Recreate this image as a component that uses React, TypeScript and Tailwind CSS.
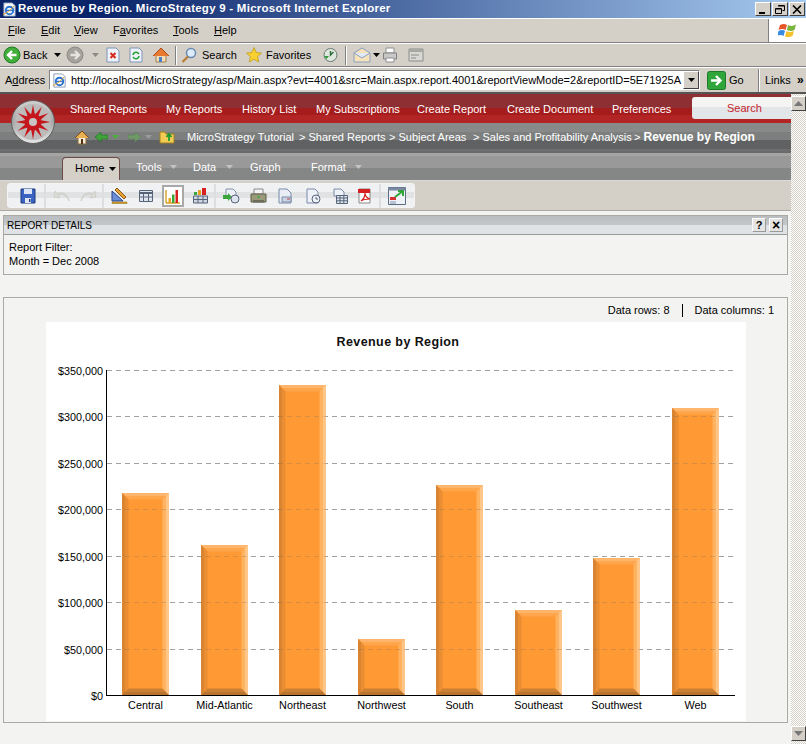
import type { ReactNode } from "react";

const UI = "font-['Liberation_Sans',Arial,sans-serif]";

function Ico({ w = 16, h = 16, vb = "0 0 16 16", className = "", children }: { w?: number; h?: number; vb?: string; className?: string; children: ReactNode }) {
  return (
    <svg width={w} height={h} viewBox={vb} className={`block shrink-0 ${className}`}>
      {children}
    </svg>
  );
}

function Caret({ color = "#000", className = "" }: { color?: string; className?: string }) {
  return (
    <svg width="7" height="4" viewBox="0 0 7 4" className={`block shrink-0 ${className}`}>
      <path d="M0 0h7L3.5 4z" fill={color} />
    </svg>
  );
}

function IeIcon() {
  return (
    <Ico w={15} h={15}>
      <path d="M2 1h9l3 3v11H2z" fill="#fff" stroke="#8a9ab5" />
      <circle cx="8" cy="9" r="4" fill="none" stroke="#2a74d4" strokeWidth="2" />
      <path d="M4 9h8" stroke="#2a74d4" strokeWidth="1.5" />
      <path d="M1 13c3 0 9-5 12-9" stroke="#e8a020" strokeWidth="1" fill="none" />
    </Ico>
  );
}

function NavCircle({ color, edge }: { color: string; edge: string }) {
  return (
    <Ico w={18} h={18} vb="0 0 18 18">
      <circle cx="9" cy="9" r="8" fill={color} stroke={edge} />
      <path d="M13.5 9H6M9 5L5 9l4 4" fill="none" stroke="#fff" strokeWidth="2.4" />
    </Ico>
  );
}

function ForwardCircle() {
  return (
    <Ico w={18} h={18} vb="0 0 18 18">
      <circle cx="9" cy="9" r="8" fill="#a5a39c" stroke="#8c8a84" />
      <path d="M4.5 9H12M9 5l4 4-4 4" fill="none" stroke="#e6e4de" strokeWidth="2.4" />
    </Ico>
  );
}

function MenuBar() {
  const items: [string, string, string, number][] = [
    ["", "F", "ile", 33],
    ["", "E", "dit", 33],
    ["", "V", "iew", 39],
    ["F", "a", "vorites", 60],
    ["", "T", "ools", 41],
    ["", "H", "elp", 30],
  ];
  return (
    <div className="flex h-[25px] border-t border-t-white border-b border-b-[#808080] bg-[#d4d0c8]">
      <div className="flex flex-1 items-center pl-[8px] text-[11px] text-black">
        {items.map(([a, u, b, w]) => (
          <span key={u} style={{ width: w }}>
            {a}
            <span className="underline">{u}</span>
            {b}
          </span>
        ))}
      </div>
      <div className="flex w-[38px] items-center justify-center border-l border-l-[#808080] bg-white">
        <Ico w={20} h={18} vb="0 0 20 18">
          <path d="M2 3q4-2 7 0l-1.500 5q-3-2-7 0z" fill="#e8552a" />
          <path d="M10 3q4 2 8-.5L16.500 8q-4 2-7.500 0z" fill="#7ab53a" />
          <path d="M.5 9q4-2 6.500 0L5.500 14q-3-2-6.500 0z" fill="#3a8ae0" />
          <path d="M8.500 9q3 2 7.500 0l-1.500 5q-4 2-7.500.5z" fill="#f6c22c" />
        </Ico>
      </div>
    </div>
  );
}

function StdToolbar() {
  return (
    <div className="flex h-[24px] items-center border-t border-t-white border-b border-b-[#808080] bg-[#d4d0c8] pl-[3px] text-[11px] text-black">
      <NavCircle color="#3fae3a" edge="#1f7a22" />
      <span className="ml-[2px] w-[28px]">Back</span>
      <Caret className="ml-[3px]" />
      <span className="ml-[5px]">
        <ForwardCircle />
      </span>
      <Caret color="#8c8a84" className="ml-[8px]" />
      <Ico className="ml-[6px]">
        <path d="M2 1h9l3 3v11H2z" fill="#eef3fb" stroke="#7f94b8" />
        <path d="M5.500 6l5 5m0-5l-5 5" stroke="#d8281c" strokeWidth="2" />
      </Ico>
      <Ico className="ml-[7px]">
        <path d="M2 1h9l3 3v11H2z" fill="#eef3fb" stroke="#7f94b8" />
        <path d="M5 8a3 3 0 0 1 5-2l1 1M11 9a3 3 0 0 1-5 2l-1-1" fill="none" stroke="#22a030" strokeWidth="1.600" />
      </Ico>
      <Ico w={18} h={18} vb="0 0 18 18" className="ml-[8px]">
        <path d="M4 9v7h10V9" fill="#f4dcb4" stroke="#a08050" />
        <path d="M1 10l8-8 8 8" fill="#e87a30" stroke="#b04a18" />
        <path d="M7 11h3v5H7z" fill="#4a80c8" />
      </Ico>
      <span className="ml-[5px] h-[19px] w-[2px] border-l border-l-[#808080] border-r border-r-white" />
      <Ico className="ml-[4px]">
        <circle cx="10" cy="6" r="4.500" fill="#dcecfb" stroke="#6a8ab0" strokeWidth="1.500" />
        <path d="M7 9.500L1.500 15" stroke="#b8803a" strokeWidth="2.400" />
      </Ico>
      <span className="ml-[5px] w-[40px]">Search</span>
      <Ico className="ml-[4px]">
        <path d="M8 .5l2.300 5 5.200.6-3.900 3.500 1.100 5.400L8 12.300 3.300 15l1.100-5.400L.5 6.100l5.200-.6z" fill="#f8d030" stroke="#c09a20" strokeWidth=".8" />
      </Ico>
      <span className="ml-[4px] w-[50px]">Favorites</span>
      <Ico className="ml-[6px]">
        <circle cx="8.500" cy="8" r="6.500" fill="#dfe8df" stroke="#6a7a70" />
        <path d="M2 9l2.500 3L7 9" fill="#2e9a3a" />
        <path d="M8.500 4v4l3-3" fill="none" stroke="#2b6a35" strokeWidth="1.400" />
      </Ico>
      <span className="ml-[7px] h-[19px] w-[2px] border-l border-l-[#808080] border-r border-r-white" />
      <Ico w={18} h={16} vb="0 0 18 16" className="ml-[6px]">
        <path d="M1 6l8-5 8 5v9H1z" fill="#f6e2b8" stroke="#8aa0c0" />
        <path d="M1 6l8 5 8-5" fill="#dfe9f8" stroke="#8aa0c0" />
      </Ico>
      <Caret className="ml-[2px]" />
      <Ico className="ml-[2px]">
        <path d="M4 1h8v5H4z" fill="#fff" stroke="#909090" />
        <path d="M1.500 6h13v6h-13z" fill="#c8c8c8" stroke="#808080" />
        <path d="M4 11h8v4H4z" fill="#fff" stroke="#909090" />
      </Ico>
      <Ico className="ml-[10px]">
        <path d="M1 2h14v12H1z" fill="#d8d8d4" stroke="#8c8c88" />
        <path d="M1 2h14v3H1z" fill="#a8a8a4" />
        <path d="M3 8h8M3 11h5" stroke="#8c8c88" />
      </Ico>
    </div>
  );
}

function AddressBar() {
  return (
    <div className="flex h-[25px] items-center border-t border-t-white bg-[#d4d0c8] text-[11px] text-black">
      <span className="w-[49px] pl-[5px]">
        A<span className="underline">d</span>dress
      </span>
      <div className="flex h-[20px] w-[651px] items-center border border-t-[#808080] border-l-[#808080] border-r-white border-b-white bg-white">
        <span className="ml-[2px]">
          <IeIcon />
        </span>
        <span className="ml-[4px] flex-1 overflow-hidden whitespace-nowrap text-[11px]">
          http://localhost/MicroStrategy/asp/Main.aspx?evt=4001&amp;src=Main.aspx.report.4001&amp;reportViewMode=2&amp;reportID=5E71925A
        </span>
        <span className="flex h-[18px] w-[16px] shrink-0 items-center justify-center border border-t-white border-l-white border-r-[#404040] border-b-[#404040] bg-[#d4d0c8]">
          <Caret />
        </span>
      </div>
      <span className="ml-[7px]">
        <Ico w={19} h={19} vb="0 0 19 19">
          <rect x=".5" y=".5" width="18" height="18" rx="2" fill="#2fa53a" stroke="#1c7a28" />
          <path d="M4 9.500h9M9 5l4.500 4.500L9 14" fill="none" stroke="#fff" strokeWidth="2.400" />
        </Ico>
      </span>
      <span className="ml-[3px] w-[29px]">Go</span>
      <span className="h-[23px] w-[2px] border-l border-l-[#808080] border-r border-r-white" />
      <span className="ml-[5px] w-[32px]">Links</span>
      <span className="text-[12px] font-bold leading-none">»</span>
    </div>
  );
}

function Logo() {
  const rays = Array.from({ length: 12 }, (_, i) => i * 30);
  return (
    <svg width="44" height="44" viewBox="0 0 44 44" className="absolute left-[11px] top-[6px] block">
      <defs>
        <linearGradient id="ring" x1="0" y1="0" x2="0" y2="1">
          <stop offset="0" stopColor="#d0d0d0" />
          <stop offset="0.5" stopColor="#a8a8a8" />
          <stop offset="1" stopColor="#e8e8e8" />
        </linearGradient>
      </defs>
      <circle cx="22" cy="22" r="21.500" fill="url(#ring)" stroke="#5e5e5e" />
      <circle cx="22" cy="22" r="18" fill="#bdbaba" />
      {rays.map((r) => (
        <path key={r} d="M19.500 18L22 4.500 24.500 18z" fill="#c4161c" transform={`rotate(${r} 22 22)`} />
      ))}
      <circle cx="22" cy="22" r="8.500" fill="#c4161c" />
      <circle cx="22" cy="22" r="4" fill="#c9c4c4" />
    </svg>
  );
}

function RedNav() {
  const links: [string, number][] = [
    ["Shared Reports", 96],
    ["My Reports", 76],
    ["History List", 74],
    ["My Subscriptions", 101],
    ["Create Report", 90],
    ["Create Document", 105],
    ["Preferences", 80],
  ];
  return (
    <div className="flex h-[29px] bg-[linear-gradient(#8e3033_0,#8e3033_48%,#a51c1c_48%,#a51c1c_72%,#b32424_72%)] pl-[70px]">
      {links.map(([t, w]) => (
        <span key={t} style={{ width: w }} className="pt-[8px] text-[11px] leading-[14px] text-white">
          {t}
        </span>
      ))}
      <div className="mt-[3px] h-[22px] flex-1 rounded-l-[3px] bg-[linear-gradient(#f4f4f2_0,#f4f4f2_45%,#e2e6e9_45%)] pt-[4px] pl-[35px] text-[11px] leading-[14px] text-[#c4252b]">
        Search
      </div>
    </div>
  );
}

function Breadcrumb() {
  const crumbs = ["MicroStrategy Tutorial", "> Shared Reports", "> Subject Areas", "> Sales and Profitability Analysis"];
  return (
    <div className="flex h-[28px] items-center bg-[linear-gradient(#888a8a_0,#888a8a_32%,#7d7f7f_32%,#7d7f7f_60%,#5f6162_60%,#5f6162_94%,#6e6e6e_94%)] pl-[74px] text-[11px] text-white">
      <Ico>
        <path d="M4 8v7h8V8" fill="#f6ecd8" stroke="#8a6a3a" />
        <path d="M1 9l7-7 7 7" fill="#e8b050" stroke="#7a4a18" />
        <path d="M7 10h2v5H7z" fill="#503010" />
      </Ico>
      <Ico className="ml-[5px]" w={13} h={10} vb="0 0 13 10">
        <path d="M6 0v3h7v4H6v3L0 5z" fill="#3fa53a" stroke="#1e6a20" strokeWidth=".6" />
      </Ico>
      <Caret color="#4caf3e" className="ml-[4px]" />
      <Ico className="ml-[9px]" w={13} h={10} vb="0 0 13 10">
        <path d="M7 0v3H0v4h7v3l6-5z" fill="#6f9a68" stroke="#5a7a55" strokeWidth=".6" />
      </Ico>
      <Caret color="#9a9a9a" className="ml-[4px]" />
      <Ico className="ml-[7px]">
        <path d="M1 3h5l1 2h8v9H1z" fill="#f3cc55" stroke="#a08020" />
        <path d="M10 12V6M7.500 8L10 5l2.500 3" fill="none" stroke="#1f9a30" strokeWidth="1.800" />
      </Ico>
      <span className="ml-[12px] w-[112px] whitespace-nowrap">{crumbs[0]}</span>
      <span className="w-[90px] whitespace-nowrap">{crumbs[1]}</span>
      <span className="w-[84px] whitespace-nowrap">{crumbs[2]}</span>
      <span className="w-[161px] whitespace-nowrap">{crumbs[3]}</span>
      <span className="whitespace-nowrap">
        {"> "}
        <b className="text-[12px]">Revenue by Region</b>
      </span>
    </div>
  );
}

function TabBar() {
  return (
    <div className="flex h-[29px] border-t-[2px] border-t-[#6a6a6a] bg-[linear-gradient(#a5a5a3_0,#a5a5a3_12%,#999_12%,#999_57%,#858787_57%)] pl-[62px] text-[11px] text-white">
      <div className="mt-[4px] flex h-[23px] w-[58px] items-center rounded-t-[4px] border border-b-0 border-[#6b4a48] bg-[#d4d0c8] pb-[2px] pl-[12px] text-black">
        Home
        <Caret className="ml-[5px] mt-[2px]" />
      </div>
      <div className="ml-[16px] flex items-center pt-[1px]">
        <span className="w-[34px]">Tools</span>
        <Caret color="#c4c4c4" />
        <span className="ml-[16px] w-[33px]">Data</span>
        <Caret color="#c4c4c4" />
        <span className="ml-[17px] w-[61px]">Graph</span>
        <span className="w-[44px]">Format</span>
        <Caret color="#c4c4c4" />
      </div>
    </div>
  );
}

function Tool({ children, ml = 0, active = false }: { children: ReactNode; ml?: number; active?: boolean }) {
  return (
    <span
      style={{ marginLeft: ml }}
      className={`flex h-[22px] w-[22px] items-center justify-center ${active ? "border-2 border-[#a8a8a8] bg-white" : ""}`}
    >
      {children}
    </span>
  );
}

function Sep() {
  return <span className="block h-[24px] w-[2px] shrink-0 bg-[#dcdedf]" />;
}

function ActionBar() {
  return (
    <div className="h-[31px] border-t border-t-[#d8d8d8] border-b border-b-[#a9a9a5] bg-[#d4d0c8] pt-[2px] pl-[7px]">
      <div className="flex h-[25px] w-[408px] items-center rounded-[3px] border border-[#f4f4f4] bg-[linear-gradient(#eff1f2_0,#eff1f2_35%,#e0e2e3_35%,#e0e2e3_60%,#eff1f2_60%)] pl-[9px]">
        <Tool>
          <Ico>
            <path d="M1 1h14v14H1z" fill="#3a62c0" stroke="#1c3a80" />
            <path d="M4 1h8v5H4z" fill="#dde6f6" />
            <path d="M5 10h6v5H5z" fill="#dfe6f2" />
            <path d="M9 11h1.500v3H9z" fill="#1c3a80" />
          </Ico>
        </Tool>
        <span className="ml-[5px]">
          <Sep />
        </span>
        <Tool ml={4}>
          <Ico w={17} h={12} vb="0 0 17 12">
            <path d="M16 11C14 5 8 3 5 5l2 3-6-1 1-6 2 3c5-3 11 0 12 7z" fill="#dcdcd6" stroke="#c4c4be" strokeWidth=".6" />
          </Ico>
        </Tool>
        <Tool ml={5}>
          <Ico w={17} h={12} vb="0 0 17 12">
            <path d="M1 11C3 5 9 3 12 5l-2 3 6-1-1-6-2 3C8 1 2 4 1 11z" fill="#dcdcd6" stroke="#c4c4be" strokeWidth=".6" />
          </Ico>
        </Tool>
        <span className="ml-[3px]">
          <Sep />
        </span>
        <Tool ml={4}>
          <Ico w={17} h={17} vb="0 0 17 17">
            <path d="M1 14V4l11 10z" fill="#6a8fd8" stroke="#24408a" />
            <path d="M4 3l2-2 9 9-2 2z" fill="#e8a030" stroke="#8a5a18" />
            <path d="M1 15h15v1.500H1z" fill="#d8a020" stroke="#8a6a10" strokeWidth=".5" />
          </Ico>
        </Tool>
        <Tool ml={5}>
          <Ico>
            <path d="M1.500 2.500h13v11h-13z" fill="#dfe5ee" stroke="#566478" />
            <path d="M1.500 5h13" stroke="#566478" strokeWidth="2" />
            <path d="M5.500 5v8.500M10.500 5v8.500M1.500 9h13" stroke="#566478" />
          </Ico>
        </Tool>
        <Tool ml={5} active>
          <Ico>
            <path d="M1 15h14M1 2v13" stroke="#d8a020" strokeWidth="1.400" />
            <path d="M3.500 10h2.500v5H3.500z" fill="#e8a020" />
            <path d="M7 6.500h2.500V15H7z" fill="#3aa53a" />
            <path d="M10.500 2h2.500v13h-2.500z" fill="#d82020" />
          </Ico>
        </Tool>
        <Tool ml={5}>
          <Ico w={15} h={17} vb="0 0 15 17">
            <path d="M1 5h3v3H1z" fill="#3aa53a" />
            <path d="M5 3h3v5H5z" fill="#e8a020" />
            <path d="M9 1h4v7H9z" fill="#d82020" />
            <path d="M.5 9h14v7H.5z" fill="#cfd6e2" stroke="#566478" />
            <path d="M.5 12.500h14M5 9v7M10 9v7" stroke="#566478" />
          </Ico>
        </Tool>
        <span className="ml-[3px]">
          <Sep />
        </span>
        <Tool ml={4}>
          <Ico w={18} h={16} vb="0 0 18 16">
            <path d="M4 1h7l3 3v5H4z" fill="#eef1f8" stroke="#8090a8" />
            <path d="M1 7h5V5l4 4-4 4v-2H1z" fill="#3aa53a" />
            <circle cx="13" cy="11" r="4" fill="#dfe5ee" stroke="#566478" />
          </Ico>
        </Tool>
        <Tool ml={5}>
          <Ico w={17} h={16} vb="0 0 17 16">
            <path d="M4 1h9v5H4z" fill="#f4f4f4" stroke="#888" />
            <path d="M1 6h15v8H1z" fill="#9a9a7a" stroke="#5c5c48" />
            <path d="M3 12h11v2.500H3z" fill="#6c6c58" />
            <circle cx="8.500" cy="9" r="1.200" fill="#42a842" />
          </Ico>
        </Tool>
        <Tool ml={5}>
          <Ico>
            <path d="M2 1h8l4 4v10H2z" fill="#e8edf6" stroke="#7a8aa8" />
            <path d="M5 9h9v5H5z" fill="#c9d3e4" stroke="#7a8aa8" />
            <path d="M10 11h3" stroke="#c04040" />
          </Ico>
        </Tool>
        <Tool ml={6}>
          <Ico>
            <path d="M2 1h8l3 3v11H2z" fill="#eef1f8" stroke="#7a8aa8" />
            <circle cx="11" cy="11" r="4" fill="#eef1f8" stroke="#566478" />
            <path d="M11 9v2h2" fill="none" stroke="#566478" />
          </Ico>
        </Tool>
        <Tool ml={5}>
          <Ico>
            <path d="M2 1h7l3 3v4H2z" fill="#eef1f8" stroke="#7a8aa8" />
            <path d="M4.500 7.500h11v8h-11z" fill="#dfe5ee" stroke="#566478" />
            <path d="M4.500 10h11M4.500 12.800h11M8 7.500v8M11.800 7.500v8" stroke="#566478" />
          </Ico>
        </Tool>
        <Tool ml={3}>
          <Ico>
            <path d="M2 1h11v14H2z" fill="#fff" stroke="#888" />
            <path d="M1 1h12v4H1z" fill="#d42020" />
            <path d="M4 13c3-2 4-5 4-8 0 3 2 5 5 6-3 0-6 0-9 2z" fill="none" stroke="#d42020" strokeWidth="1.200" />
          </Ico>
        </Tool>
        <span className="ml-[3px]">
          <Sep />
        </span>
        <Tool ml={5}>
          <Ico w={18} h={18} vb="0 0 18 18">
            <path d="M.5.5h17v17H.5z" fill="#eef1f5" stroke="#5c6c84" />
            <path d="M.5.5h17v3H.5z" fill="#7a8aa4" />
            <path d="M2 10h6v3H2z" fill="#d83030" />
            <path d="M2 14h6v3H2z" fill="#b8c2d2" />
            <path d="M7 10l8-6M10 4h5v5" fill="none" stroke="#2fa53a" strokeWidth="2" />
          </Ico>
        </Tool>
      </div>
    </div>
  );
}

function ReportDetails() {
  return (
    <div className="mx-[3px] mt-[4px] h-[60px] border border-[#a9aaa5]">
      <div className="flex h-[19px] items-center justify-between border-b border-b-[#9a9a98] bg-[linear-gradient(#b9bdc0_0,#c3c7ca_50%,#dfe3e6_50%)] pl-[3px] pr-[4px] text-[10px] text-black">
        <span>REPORT DETAILS</span>
        <span className="flex gap-[3px]">
          <span className="flex h-[14px] w-[14px] items-center justify-center border border-t-white border-l-white border-r-[#9a9a9a] border-b-[#9a9a9a] bg-[#e4e4e2] text-[11px] leading-none font-bold">?</span>
          <span className="flex h-[14px] w-[14px] items-center justify-center border border-t-white border-l-white border-r-[#9a9a9a] border-b-[#9a9a9a] bg-[#e4e4e2] text-[14px] leading-none font-bold">×</span>
        </span>
      </div>
      <div className="pt-[5px] pl-[5px] text-[11px] leading-[14px] text-black">
        <div>Report Filter:</div>
        <div>Month = Dec 2008</div>
      </div>
    </div>
  );
}

const BARS: [string, number, number][] = [
  ["Central", 122, 493],
  ["Mid-Atlantic", 201, 545],
  ["Northeast", 279, 385],
  ["Northwest", 358, 639],
  ["South", 436, 485],
  ["Southeast", 515, 610],
  ["Southwest", 593, 558],
  ["Web", 672, 408],
];
const TICKS = ["$350,000", "$300,000", "$250,000", "$200,000", "$150,000", "$100,000", "$50,000", "$0"];
const BOTTOM = 695;
const LINE_STEP = 46.43;

function Chart() {
  return (
    <svg width="700" height="399" viewBox="46 322 700 399" className="ml-[42px] block bg-white" fontFamily="'Liberation Sans', Arial, sans-serif">
      <text x="398" y="346" textAnchor="middle" fontSize="12.500" fontWeight="700" letterSpacing="0.4" fill="#111">
        Revenue by Region
      </text>
      {TICKS.map((t, i) => {
        const y = Math.round(370 + i * LINE_STEP) + 0.5;
        return (
          <g key={t}>
            <text x="103" y={y + 4} textAnchor="end" fontSize="10.800" fill="#000">
              {t}
            </text>
            {i < 7 ? <line x1="107" x2="734" y1={y} y2={y} stroke="#b4b4b4" strokeDasharray="5 4" /> : null}
          </g>
        );
      })}
      {BARS.map(([name, x, top]) => {
        const r = x + 47;
        const h = BOTTOM - top;
        return (
          <g key={name}>
            <rect x={x} y={top} width="47" height={h} fill="#ff9933" />
            <path d={`M${r} ${top}h-3v${h}h3z`} fill="#ffc68a" />
            <path d={`M${r - 3} ${top + 3}h-3.500v${h - 6}h3.500z`} fill="#ffb25f" />
            <path d={`M${x} ${top}h47l-3 3h-41z`} fill="#ffb56c" />
            <path d={`M${x + 3} ${top + 3}h41l-3.500 3.500h-34z`} fill="#ffa64d" />
            <path d={`M${x} ${top}l3 3v${h - 6}l-3 3z`} fill="#d98431" />
            <path d={`M${x + 3} ${top + 3}l3.500 3.500v${h - 13}l-3.500 3.500z`} fill="#ea8d33" />
            <path d={`M${x} ${BOTTOM}l3-3h41l3 3z`} fill="#b9742f" />
            <path d={`M${x + 3} ${BOTTOM - 3}l3.500-3.500h34l3.500 3.500z`} fill="#cc8033" />
          </g>
        );
      })}
      {TICKS.slice(0, 7).map((t, i) => {
        const y = Math.round(370 + i * LINE_STEP) + 0.5;
        return <line key={t} x1="107" x2="734" y1={y} y2={y} stroke="#666" strokeOpacity="0.25" strokeDasharray="5 4" />;
      })}
      <line x1="106.500" x2="106.500" y1="370" y2="696" stroke="#000" />
      <line x1="106" x2="735" y1="695.500" y2="695.500" stroke="#000" />
      {BARS.map(([name, x]) => (
        <text key={name} x={x + 23.5} y="709" textAnchor="middle" fontSize="10.800" fill="#000">
          {name}
        </text>
      ))}
    </svg>
  );
}

function DataPanel() {
  return (
    <div className="mx-[3px] mt-[22px] h-[426px] border border-[#a9aaa5]">
      <div className="flex h-[24px] items-center justify-end pr-[13px] text-[11px] text-black">
        <span>Data rows: 8</span>
        <span className="mx-[12px] h-[13px] w-px bg-black" />
        <span>Data columns: 1</span>
      </div>
      <Chart />
    </div>
  );
}

function Scrollbar() {
  return (
    <div className="flex w-[15px] shrink-0 flex-col justify-between bg-[repeating-conic-gradient(#d4d0c8_0_25%,#fff_0_50%)] bg-[length:2px_2px] pt-[2px] pb-[3px]">
      <span className="flex h-[15px] w-[15px] items-center justify-center border border-t-white border-l-white border-r-[#404040] border-b-[#404040] bg-[#d4d0c8]">
        <svg width="9" height="5" viewBox="0 0 9 5" className="block">
          <path d="M0 5h9L4.500 0z" fill="#777" />
        </svg>
      </span>
      <span className="flex h-[15px] w-[15px] items-center justify-center border border-t-white border-l-white border-r-[#404040] border-b-[#404040] bg-[#d4d0c8]">
        <svg width="9" height="5" viewBox="0 0 9 5" className="block">
          <path d="M0 0h9L4.500 5z" fill="#777" />
        </svg>
      </span>
    </div>
  );
}

export default function App() {
  return (
    <div className={`flex h-[744px] w-[806px] flex-col overflow-hidden bg-[#d4d0c8] ${UI}`}>
      <div className="flex h-[18px] items-center bg-[linear-gradient(90deg,#0a246a_0,#0a246a_12%,#a6caf0_100%)] pl-[2px] pr-[1px]">
        <IeIcon />
        <span className="ml-[1px] flex-1 whitespace-nowrap text-[11.500px] font-bold tracking-[0.25px] text-white">
          Revenue by Region. MicroStrategy 9 - Microsoft Internet Explorer
        </span>
        <span className="flex gap-[1px]">
          {["min", "max", "close"].map((k) => (
            <span key={k} className="flex h-[14px] w-[16px] items-center justify-center border border-t-white border-l-white border-r-[#404040] border-b-[#404040] bg-[#d4d0c8]">
              <svg width="10" height="9" viewBox="0 0 10 9" className="block">
                {k === "min" ? <path d="M1 7h6v2H1z" fill="#000" /> : null}
                {k === "max" ? <path d="M3.500.5h6v5h-2M.5 3.500h6v5h-6zM3 1h6M1 4h5" fill="none" stroke="#000" /> : null}
                {k === "close" ? <path d="M1 .5l8 8m0-8l-8 8" stroke="#000" strokeWidth="1.600" /> : null}
              </svg>
            </span>
          ))}
        </span>
      </div>
      <MenuBar />
      <StdToolbar />
      <AddressBar />
      <div className="flex min-h-0 flex-1 border-t-[2px] border-t-[#555]">
        <div className="relative min-w-0 flex-1 bg-[#f3f3f1]">
          <RedNav />
          <Breadcrumb />
          <TabBar />
          <ActionBar />
          <ReportDetails />
          <DataPanel />
          <Logo />
        </div>
        <Scrollbar />
      </div>
    </div>
  );
}
